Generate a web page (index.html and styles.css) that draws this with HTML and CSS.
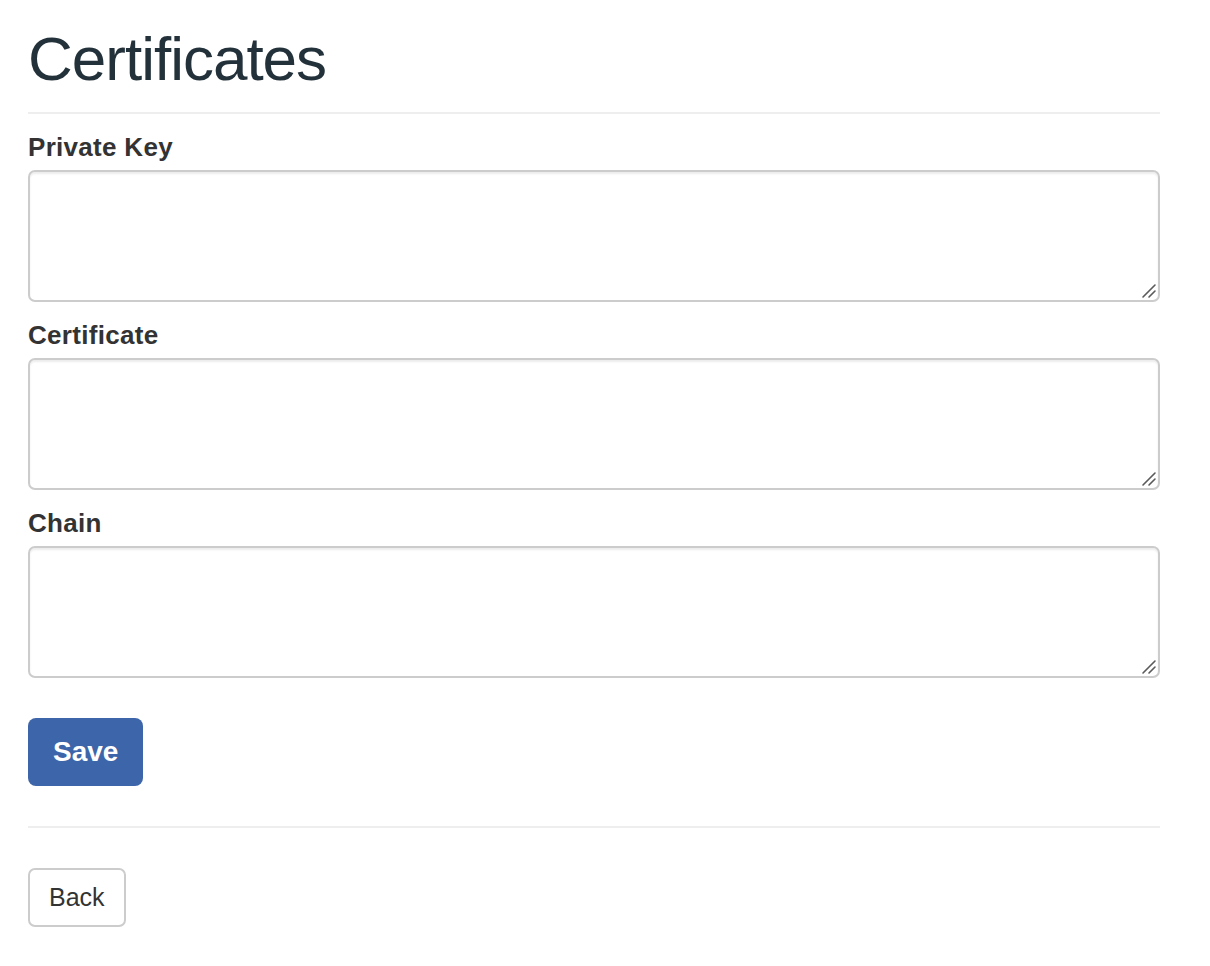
FILE: index.html
```html
<!DOCTYPE html>
<html>
<head>
<meta charset="utf-8">
<link rel="stylesheet" href="styles.css">
</head>
<body>
<div class="page">
  <h1 class="title">Certificates</h1>
  <hr class="rule rule-top">
  <form class="form">
    <div class="group">
      <label class="label" for="pk">Private Key</label>
      <div class="field-wrap">
        <textarea class="field" id="pk"></textarea>
        <svg class="grip" width="16" height="16" viewBox="0 0 16 16"><path d="M2 14 L14 2 M8 14 L14 8" stroke="#5a5a5a" stroke-width="1.6" stroke-linecap="round" fill="none"/></svg>
      </div>
    </div>
    <div class="group">
      <label class="label" for="cert">Certificate</label>
      <div class="field-wrap">
        <textarea class="field" id="cert"></textarea>
        <svg class="grip" width="16" height="16" viewBox="0 0 16 16"><path d="M2 14 L14 2 M8 14 L14 8" stroke="#5a5a5a" stroke-width="1.6" stroke-linecap="round" fill="none"/></svg>
      </div>
    </div>
    <div class="group">
      <label class="label" for="chain">Chain</label>
      <div class="field-wrap">
        <textarea class="field" id="chain"></textarea>
        <svg class="grip" width="16" height="16" viewBox="0 0 16 16"><path d="M2 14 L14 2 M8 14 L14 8" stroke="#5a5a5a" stroke-width="1.6" stroke-linecap="round" fill="none"/></svg>
      </div>
    </div>
    <button type="button" class="btn-save">Save</button>
  </form>
  <hr class="rule rule-bottom">
  <button type="button" class="btn-back">Back</button>
</div>
</body>
</html>
```

FILE: styles.css
```css
html, body {
  margin: 0;
  padding: 0;
  background: #ffffff;
}
body {
  font-family: "Liberation Sans", Arial, Helvetica, sans-serif;
  color: #333333;
}
.page {
  width: 1132px;
  padding: 24px 0 0 28px;
}
.title {
  margin: 0;
  font-size: 62px;
  line-height: 70px;
  letter-spacing: -1px;
  font-weight: normal;
  color: #23313a;
}
.rule {
  border: 0;
  height: 2px;
  background: #eeeeee;
  margin: 0;
}
.rule-top {
  margin-top: 18px;
  margin-bottom: 18px;
}
.form {
  display: flex;
  flex-direction: column;
  align-items: flex-start;
}
.group {
  display: flex;
  flex-direction: column;
  width: 100%;
  margin-bottom: 18px;
}
.label {
  font-size: 26px;
  line-height: 30px;
  letter-spacing: 0.3px;
  font-weight: bold;
  color: #333333;
  margin-bottom: 8px;
}
.field-wrap {
  position: relative;
  display: flex;
  width: 100%;
}
.field {
  box-sizing: border-box;
  width: 100%;
  height: 132px;
  border: 2px solid #cccccc;
  border-radius: 7px;
  box-shadow: inset 0 2px 2px rgba(0,0,0,0.075);
  margin: 0;
  padding: 10px 20px;
  font-family: inherit;
  font-size: 25px;
  resize: none;
  background: #ffffff;
}
.grip {
  position: absolute;
  right: 3px;
  bottom: 3px;
  pointer-events: none;
}
.btn-save {
  margin-top: 22px;
  height: 68px;
  padding: 0 25px;
  border: 0;
  border-radius: 8px;
  background: #3d65a9;
  color: #ffffff;
  font-family: inherit;
  font-size: 28px;
  font-weight: bold;
}
.rule-bottom {
  margin-top: 40px;
  margin-bottom: 40px;
}
.btn-back {
  box-sizing: border-box;
  height: 59px;
  padding: 0 19px;
  border: 2px solid #cccccc;
  border-radius: 7px;
  background: #ffffff;
  color: #333333;
  font-family: inherit;
  font-size: 25px;
}
```
